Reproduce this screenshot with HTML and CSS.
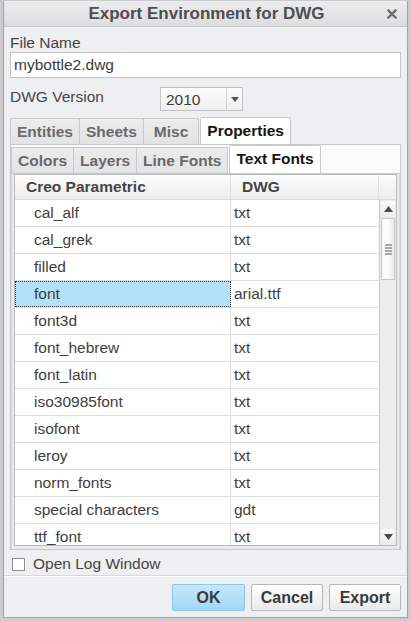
FILE: index.html
```html
<!DOCTYPE html>
<html>
<head>
<meta charset="utf-8">
<link rel="stylesheet" href="styles.css">
</head>
<body>
<div class="window">
  <div class="titlebar">
    <span class="title">Export Environment for DWG</span>
    <span class="close">
      <svg width="10" height="10" viewBox="0 0 10 10"><path d="M1.5 1.5 L8.5 8.5 M8.5 1.5 L1.5 8.5" stroke="#6f6f6f" stroke-width="2.4" stroke-linecap="square"/></svg>
    </span>
  </div>
  <div class="content">
    <div class="label file-label">File Name</div>
    <div class="input">mybottle2.dwg</div>
    <div class="version-row">
      <span class="label version-label">DWG Version</span>
      <div class="select">
        <span class="select-value">2010</span>
        <span class="select-btn"><svg width="8" height="5" viewBox="0 0 8 5"><path d="M0 0 H8 L4 5 Z" fill="#555"/></svg></span>
      </div>
    </div>
    <div class="tabs outer-tabs">
      <div class="tab">Entities</div>
      <div class="tab">Sheets</div>
      <div class="tab tab-misc">Misc</div>
      <div class="tab active">Properties</div>
    </div>
    <div class="panel">
      <div class="tabs inner-tabs">
        <div class="tab">Colors</div>
        <div class="tab">Layers</div>
        <div class="tab">Line Fonts</div>
        <div class="tab active">Text Fonts</div>
      </div>
      <div class="inner-panel">
        <div class="table">
          <div class="thead">
            <div class="th c1">Creo Parametric</div>
            <div class="th c2">DWG</div>
            <div class="th c3"></div>
          </div>
          <div class="tbody">
            <div class="rows">
              <div class="row"><div class="td c1">cal_alf</div><div class="td c2">txt</div></div>
              <div class="row"><div class="td c1">cal_grek</div><div class="td c2">txt</div></div>
              <div class="row"><div class="td c1">filled</div><div class="td c2">txt</div></div>
              <div class="row"><div class="td c1 selected">font</div><div class="td c2">arial.ttf</div></div>
              <div class="row"><div class="td c1">font3d</div><div class="td c2">txt</div></div>
              <div class="row"><div class="td c1">font_hebrew</div><div class="td c2">txt</div></div>
              <div class="row"><div class="td c1">font_latin</div><div class="td c2">txt</div></div>
              <div class="row"><div class="td c1">iso30985font</div><div class="td c2">txt</div></div>
              <div class="row"><div class="td c1">isofont</div><div class="td c2">txt</div></div>
              <div class="row"><div class="td c1">leroy</div><div class="td c2">txt</div></div>
              <div class="row"><div class="td c1">norm_fonts</div><div class="td c2">txt</div></div>
              <div class="row"><div class="td c1">special characters</div><div class="td c2">gdt</div></div>
              <div class="row"><div class="td c1">ttf_font</div><div class="td c2">txt</div></div>
            </div>
            <div class="scrollbar">
              <div class="sb-btn"><svg width="9" height="6" viewBox="0 0 9 6"><path d="M0 6 H9 L4.5 0 Z" fill="#4a4a4a"/></svg></div>
              <div class="sb-track">
                <div class="sb-thumb">
                  <div class="grip"><span></span><span></span><span></span><span></span></div>
                </div>
              </div>
              <div class="sb-btn"><svg width="9" height="6" viewBox="0 0 9 6"><path d="M0 0 H9 L4.5 6 Z" fill="#4a4a4a"/></svg></div>
            </div>
          </div>
        </div>
      </div>
    </div>
    <div class="check-row">
      <span class="checkbox"></span>
      <span class="label">Open Log Window</span>
    </div>
  </div>
  <div class="footer">
    <div class="btn primary">OK</div>
    <div class="btn">Cancel</div>
    <div class="btn">Export</div>
  </div>
</div>
</body>
</html>
```

FILE: styles.css
```css
* { box-sizing: border-box; }
html, body { margin: 0; padding: 0; }
body {
  width: 411px;
  height: 621px;
  overflow: hidden;
  background: #cfd0d2;
  font-family: "Liberation Sans", Arial, sans-serif;
  font-size: 15.5px;
  color: #454545;
}
.window {
  width: 411px;
  height: 621px;
  border: 3px solid #cbcccd;
  border-top: 1px solid #cbcccd;
  box-shadow: inset 0 0 0 1px #a2a3a5;
  background: #eeeff0;
  display: flex;
  flex-direction: column;
}
.titlebar {
  height: 26px;
  margin: 0 1px;
  background: linear-gradient(#ececed, #dcdddf);
  border-bottom: 1px solid #c6c7c9;
  display: flex;
  align-items: center;
  justify-content: center;
  position: relative;
}
.title {
  font-weight: bold;
  font-size: 17px;
  color: #4e4e4e;
  margin-left: 2px;
}
.close {
  position: absolute;
  right: 10px;
  top: 8px;
  width: 10px;
  height: 10px;
  display: flex;
}
.content {
  padding: 7px 6px 0 6px;
  margin: 0 1px;
  display: flex;
  flex-direction: column;
}
.label { color: #454545; }
.file-label { line-height: 18px; height: 18px; }
.input {
  height: 26px;
  background: #fff;
  border: 1px solid #c4c5c7;
  padding-left: 3px;
  line-height: 24px;
  color: #3c3c3c;
}
.version-row {
  margin-top: 9px;
  display: flex;
  align-items: flex-start;
  height: 24px;
}
.version-label { width: 150px; line-height: 20px; }
.select {
  width: 83px;
  height: 24px;
  border: 1px solid #c2c3c5;
  background: linear-gradient(#fdfdfd, #eeeeee);
  display: flex;
  align-items: stretch;
}
.select-value { flex: 1; padding-left: 5px; line-height: 24px; color: #3c3c3c; }
.select-btn {
  width: 16px;
  border-left: 1px solid #cfd0d2;
  display: flex;
  align-items: center;
  justify-content: center;
  padding-top: 1px;
}
.tabs {
  display: flex;
  align-items: flex-end;
}
.tab {
  font-weight: bold;
  color: #6a6a6a;
  background: linear-gradient(#ececec, #e2e3e4);
  border: 1px solid #c8c9cb;
  border-bottom: none;
  border-left: none;
  height: 26px;
  line-height: 25px;
  padding: 0 6px;
  min-width: 55px;
  text-align: center;
}
.tab:first-child { border-left: 1px solid #c8c9cb; }
.tab.active {
  color: #151515;
  background: #fff;
  height: 27px;
  border-left: 1px solid #c8c9cb;
  margin-left: 1px;
  border-radius: 2px 2px 0 0;
}
.outer-tabs { margin-top: 6px; height: 27px; }
.outer-tabs .tab-misc { min-width: 55px; padding: 0 10px 0 10px; }
.panel {
  height: 406px;
  background: #fbfbfb;
  border: 1px solid #c8c9cb;
  display: flex;
  flex-direction: column;
}
.inner-tabs { height: 28px; padding-top: 1px; }
.inner-tabs .tab { height: 26px; }
.inner-tabs .tab.active { height: 28px; }
.inner-panel {
  flex: 1;
  border-top: 1px solid #c8c9cb;
  padding: 0 2px 2px 2px;
  background: #e9eaeb;
  border-left: 1px solid #d6d7d9;
  border-right: 1px solid #d6d7d9;
}
.table {
  height: 372px;
  border: 1px solid #b9babc;
  background: #fff;
  display: flex;
  flex-direction: column;
}
.thead {
  height: 25px;
  display: flex;
  background: linear-gradient(#fdfdfd, #ececec);
  border-bottom: 1px solid #d8d9db;
}
.th {
  font-weight: bold;
  color: #454545;
  line-height: 24px;
}
.c1 { width: 216px; flex: none; }
.c2 { width: 148px; flex: none; }
.c3 { flex: 1; }
.th.c1 { padding-left: 11px; border-right: 1px solid #dfe0e1; }
.th.c2 { padding-left: 11px; border-right: 1px solid #dfe0e1; }
.tbody {
  flex: 1;
  display: flex;
  overflow: hidden;
}
.rows { width: 364px; overflow: hidden; }
.row {
  height: 27px;
  display: flex;
  border-bottom: 1px solid #dcdddf;
}
.td { line-height: 26px; color: #404040; white-space: nowrap; }
.td.c1 { padding-left: 19px; border-right: 1px solid #dcdddf; }
.td.c2 { padding-left: 3px; }
.td.selected {
  background: #b3e1fb;
  outline: 1px dotted #333;
  outline-offset: -1px;
}
.scrollbar {
  flex: 1;
  background: #ececed;
  border-left: 1px solid #c9cacc;
  display: flex;
  flex-direction: column;
  padding: 1px;
}
.sb-btn {
  height: 15px;
  display: flex;
  align-items: center;
  justify-content: center;
  background: linear-gradient(#fafafa, #ededed);
}
.sb-track { flex: 1; padding-top: 2px; }
.sb-thumb {
  height: 62px;
  border: 1px solid #c6c7c9;
  background: linear-gradient(90deg, #f7f7f7, #ffffff 40%, #e9e9e9);
  display: flex;
  align-items: center;
  justify-content: center;
}
.grip { display: flex; flex-direction: column; gap: 1px; width: 7px; }
.grip span { height: 2px; background: #a8a9ab; display: block; }
.check-row {
  margin-top: 7px;
  height: 14px;
  display: flex;
  align-items: center;
  padding-left: 2px;
}
.checkbox {
  width: 13px;
  height: 13px;
  border: 1px solid #8d8e90;
  background: #fff;
  margin-right: 8px;
}
.footer {
  margin: 5px 1px 0 1px;
  border-top: 1px solid #fafafa;
  box-shadow: 0 -1px 0 #d6d7d9;
  padding: 7px 6px 0 0;
  display: flex;
  justify-content: flex-end;
  gap: 6px;
}
.btn {
  width: 72px;
  height: 27px;
  border: 1px solid #b6b7b9;
  border-radius: 2px;
  background: linear-gradient(#fefefe, #e9eaeb);
  font-weight: bold;
  color: #3a3a3a;
  text-align: center;
  line-height: 25px;
  font-size: 16px;
}
.btn.primary {
  width: 73px;
  border-color: #8fc5ea;
  background: linear-gradient(#c7e7fc, #a2d6f8);
}
```
